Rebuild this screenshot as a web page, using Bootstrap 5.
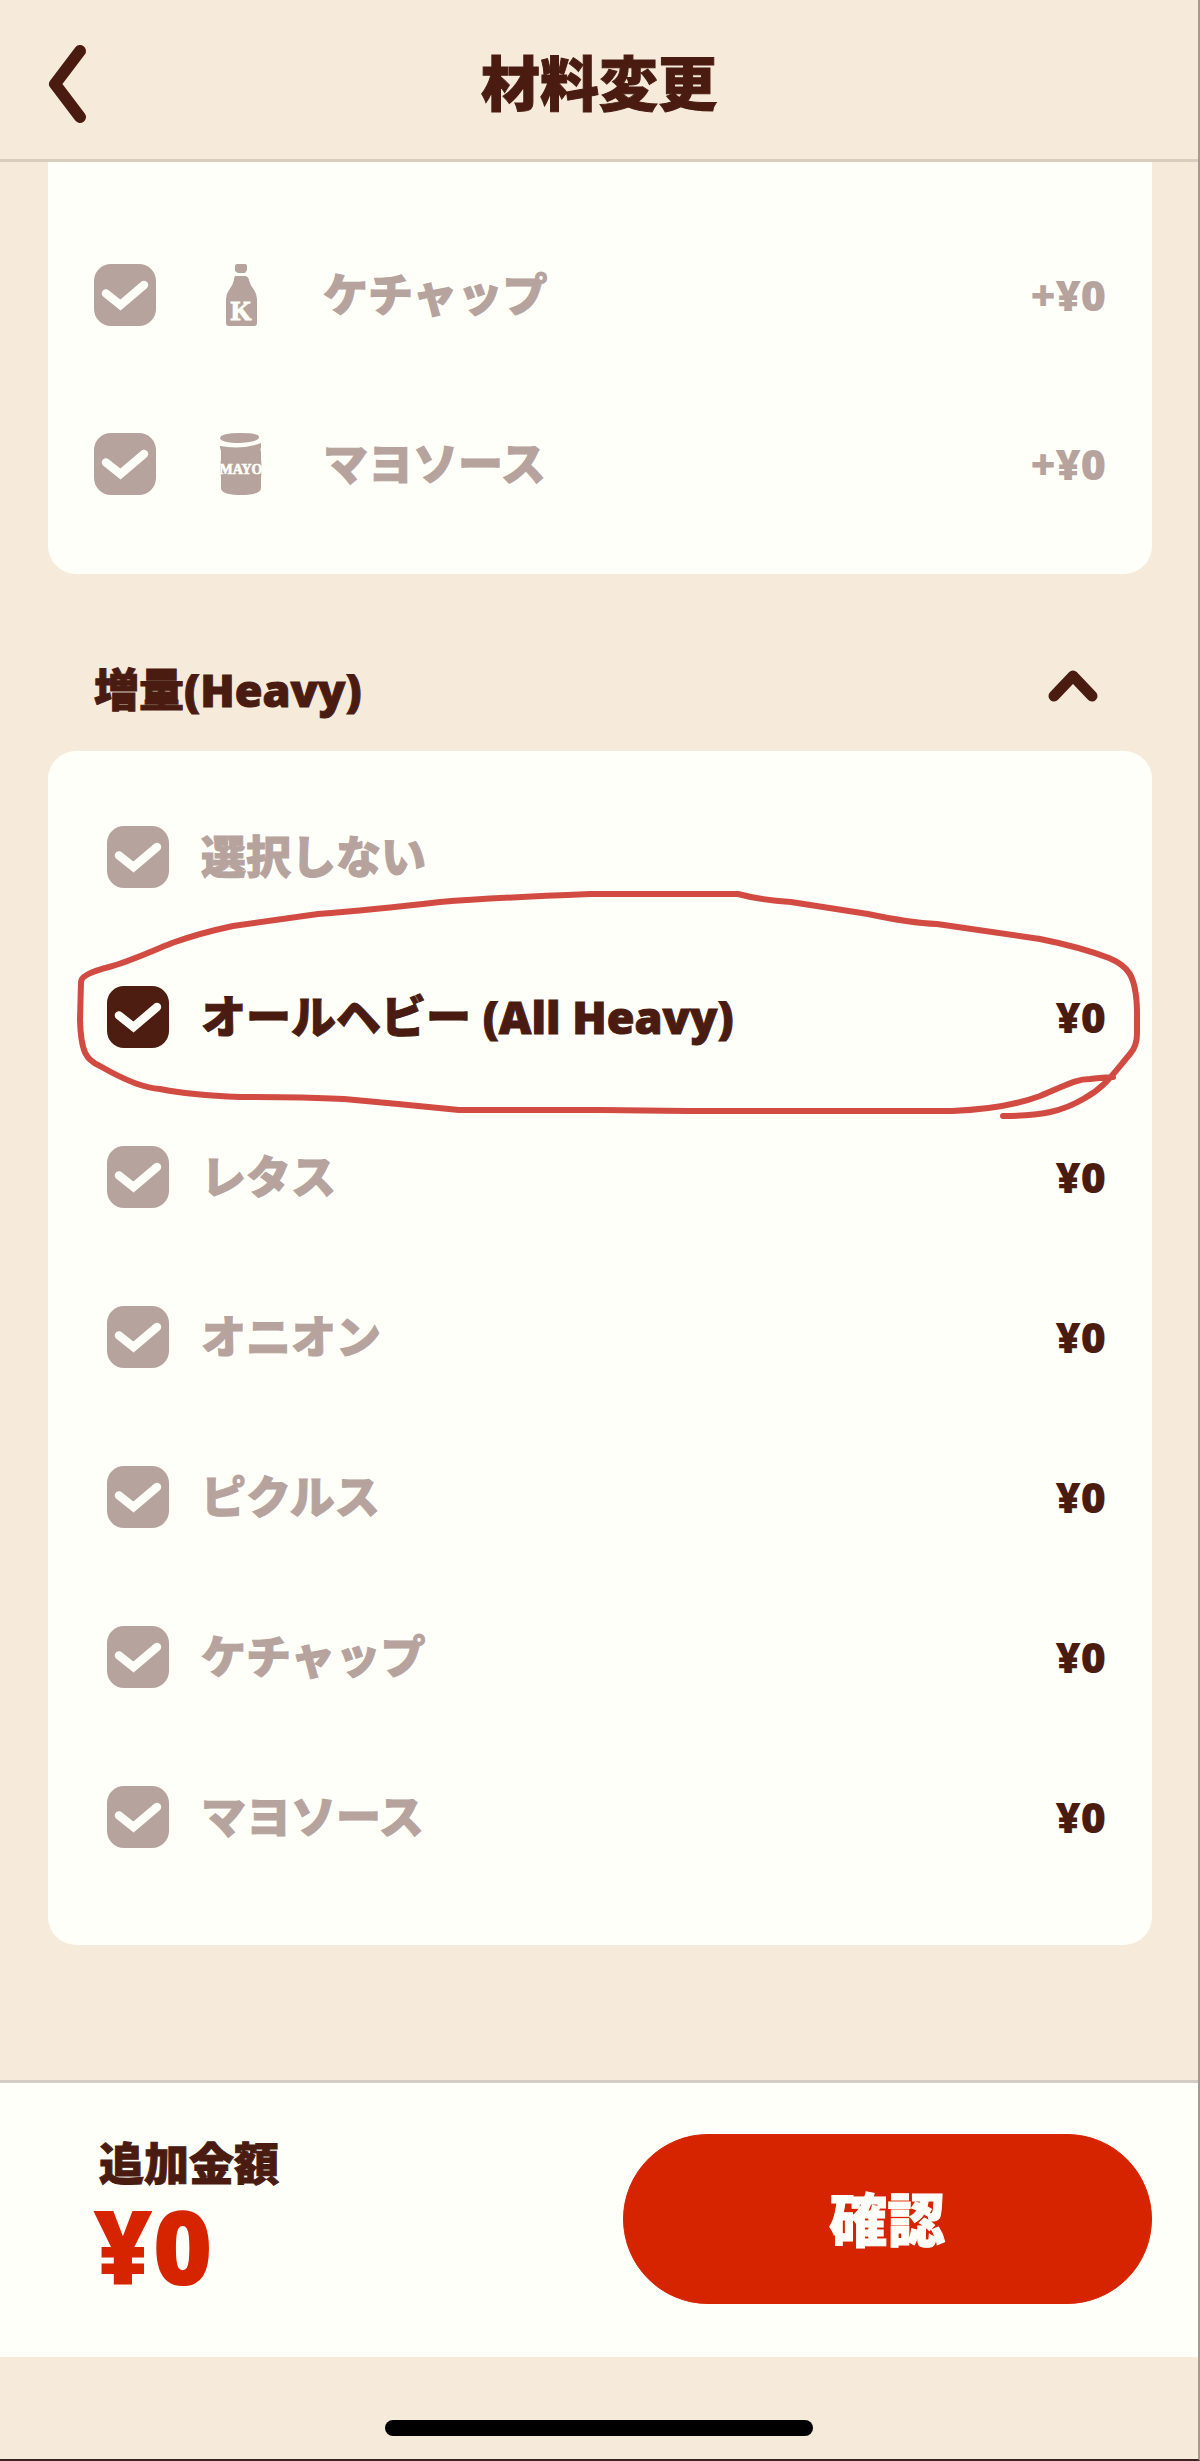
<!DOCTYPE html>
<html lang="ja">
<head>
<meta charset="utf-8">
<meta name="viewport" content="width=device-width, initial-scale=1">
<title>材料変更</title>
<link href="https://cdn.jsdelivr.net/npm/bootstrap@5.3.0/dist/css/bootstrap.min.css" rel="stylesheet">
<style>
:root { --cream:#f6eada; --paper:#fefff8; --cocoa:#4a1c11; --faded:#b6a39e; --flame:#d62300; }
body { background:var(--cream); color:var(--cocoa); font-family:"Noto Sans","Noto Sans CJK JP",sans-serif; font-weight:900; }
.screen { border-right:2px solid #a59c90; border-bottom:2px solid #3a2420; }
.topbar { height:162px; padding-top:6px; border-bottom:3px solid #d9cdbf; }
.topbar h1 { font-size:59px; line-height:80px; font-weight:900; }
.topbar h1, .name-text, .group-head span, .pay-label, .confirm { -webkit-text-stroke:1px currentColor; }
.back-btn { left:36px; top:32px; line-height:0; }
.list-area { padding:0 46px 0 48px; }
.panel { background:var(--paper); }
.panel-top { border-radius:0 0 28px 28px; padding:48px 0 26px; }
.panel-full { border-radius:28px; padding:26px 0 48px; }
.item { font-size:45px; line-height:64px; color:var(--faded); padding-right:46px; }
.item-lg { height:169px; padding-left:46px; }
.item-md { height:160px; padding-left:59px; }
.item .form-check-input { width:62px; height:62px; margin:0; border:0; border-radius:17px; background-color:var(--faded); flex:none; opacity:1; }
.item .form-check-input:checked { background-size:100% 100%; background-image:url("data:image/svg+xml,%3csvg xmlns='http://www.w3.org/2000/svg' viewBox='0 0 62 62'%3e%3cpath d='M12 29.500 26.500 41 50 21' fill='none' stroke='%23fefff8' stroke-width='8.500' stroke-linecap='round'/%3e%3c/svg%3e"); }
.item.picked .form-check-input { background-color:#4d1d11; }
.item.picked label, .cost { color:var(--cocoa); }
.cost, .cost-muted { font-size:43px; }
.gap-name { gap:32px; }
.ingredient { width:44px; height:62px; margin:0 60px 0 31px; }
.group-head { height:177px; padding:84px 52px 0 46px; font-size:45px; line-height:64px; font-weight:900; color:var(--cocoa); }
.pen { height:100%; overflow:visible; pointer-events:none; }
.paybar { background:var(--paper); border-top:3px solid #d3cbc6; margin-top:135px; height:277px; padding:51px 46px 0 93px; }
.pay-label { font-size:45px; line-height:60px; padding-left:6px; }
.pay-sum { font-size:102px; line-height:104px; color:var(--flame); }
.confirm { --bs-btn-bg:var(--flame); --bs-btn-color:var(--paper); --bs-btn-border-color:var(--flame); --bs-btn-hover-bg:#b81e00; --bs-btn-hover-color:#fff; width:50%; height:170px; font-size:58px; font-weight:900; }
.home-area { height:102px; padding-top:63px; }
.home-pill { width:428px; height:16px; background:#000; }
</style>
</head>
<body>
<div class="screen">
  <header class="topbar position-relative d-flex justify-content-center align-items-center">
    <button type="button" class="btn p-0 border-0 position-absolute back-btn" aria-label="戻る">
      <svg width="60" height="104" viewBox="0 0 60 104"><path d="M44 19 19 52 44 85" fill="none" stroke="#4a1c11" stroke-width="12" stroke-linecap="round" stroke-linejoin="round"/></svg>
    </button>
    <h1 class="m-0">材料変更</h1>
  </header>

  <main class="list-area">
    <section class="panel panel-top">
      <div class="item item-lg d-flex align-items-center">
        <input class="form-check-input" type="checkbox" id="s1" checked>
        <label for="s1" class="d-flex align-items-center ms-4 ps-2">
          <svg class="ingredient" viewBox="0 0 44 62"><path d="M18 0h8q2 0 2 2v4l-2 3h-7l-3-2V3q0-3 2-3M17 12h9q3 0 4 4 1 5 5 10 3 4 3 9v24q0 3-3 3H10q-3 0-3-3V35q0-5 3-9 4-5 5-10 0-4 2-4" fill="#b6a39e"/><text x="22" y="56" text-anchor="middle" font-family="Liberation Serif" font-weight="700" font-size="27" fill="#fefff8" stroke="#fefff8">K</text></svg>
          <span class="name-text">ケチャップ</span>
        </label>
        <span class="cost-muted ms-auto">+¥0</span>
      </div>
      <div class="item item-lg d-flex align-items-center">
        <input class="form-check-input" type="checkbox" id="s2" checked>
        <label for="s2" class="d-flex align-items-center ms-4 ps-2">
          <svg class="ingredient" viewBox="0 0 44 62"><path d="M1 5Q2 0 21 0t19 4q0 5-19 6Q2 10 1 5M1 13q22 4 41-3v4q-1 3 0 5v7q1 9 0 19v10q0 7-20 7T2 55V45q-1-10 0-20v-6q0-2-1-4z" fill="#b6a39e"/><text x="22" y="41" text-anchor="middle" font-family="Liberation Serif" font-weight="700" font-size="14" fill="#fefff8" stroke="#fefff8" stroke-width=".6">MAYO</text></svg>
          <span class="name-text">マヨソース</span>
        </label>
        <span class="cost-muted ms-auto">+¥0</span>
      </div>
    </section>

    <button type="button" class="btn border-0 w-100 d-flex justify-content-between group-head" data-bs-toggle="collapse" data-bs-target="#heavy" aria-expanded="true" aria-controls="heavy">
      <span>増量(Heavy)</span>
      <svg width="54" height="52" viewBox="0 0 54 52"><path d="M8 38 27 18 46 38" fill="none" stroke="#4a1c11" stroke-width="11" stroke-linecap="round" stroke-linejoin="round"/></svg>
    </button>

    <section class="panel panel-full collapse show" id="heavy">
      <div class="item item-md d-flex align-items-center gap-name">
        <input class="form-check-input" type="checkbox" id="h0" checked><label for="h0" class="name-text">選択しない</label>
      </div>
      <div class="item item-md d-flex align-items-center gap-name picked position-relative">
        <input class="form-check-input" type="checkbox" id="h1" checked><label for="h1" class="name-text">オールヘビー (All Heavy)</label><span class="cost ms-auto">¥0</span>
        <svg class="pen position-absolute top-0 start-0 w-100" viewBox="48 937 1104 160" preserveAspectRatio="none" aria-hidden="true"><path d="M1003 1116C1040 1116 1062 1112 1085 1098 1105 1087 1113 1074 1130 1054Q1137 1046 1137 1034V1010C1136 975 1128 966 1109 958Q1080 947 1040 939L937 924Q910 923 868 914L791 902Q760 900 738 894H590Q490 898 440 902 370 910 318 914L233 926Q200 933 172 943C145 954 128 962 109 967Q81 974 81 982L80 1020C81 1052 86 1060 100 1066Q138 1088 160 1089 190 1095 240 1097 300 1097 344 1099 400 1104 459 1110H600L688 1111H952Q1005 1109 1040 1096C1065 1086 1075 1079 1090 1079Q1098 1078 1113 1077" fill="none" stroke="#d24b43" stroke-width="6" stroke-linecap="round" stroke-linejoin="round"/></svg>
      </div>
      <div class="item item-md d-flex align-items-center gap-name">
        <input class="form-check-input" type="checkbox" id="h2" checked><label for="h2" class="name-text">レタス</label><span class="cost ms-auto">¥0</span>
      </div>
      <div class="item item-md d-flex align-items-center gap-name">
        <input class="form-check-input" type="checkbox" id="h3" checked><label for="h3" class="name-text">オニオン</label><span class="cost ms-auto">¥0</span>
      </div>
      <div class="item item-md d-flex align-items-center gap-name">
        <input class="form-check-input" type="checkbox" id="h4" checked><label for="h4" class="name-text">ピクルス</label><span class="cost ms-auto">¥0</span>
      </div>
      <div class="item item-md d-flex align-items-center gap-name">
        <input class="form-check-input" type="checkbox" id="h5" checked><label for="h5" class="name-text">ケチャップ</label><span class="cost ms-auto">¥0</span>
      </div>
      <div class="item item-md d-flex align-items-center gap-name">
        <input class="form-check-input" type="checkbox" id="h6" checked><label for="h6" class="name-text">マヨソース</label><span class="cost ms-auto">¥0</span>
      </div>
    </section>
  </main>

  <footer>
    <div class="paybar d-flex justify-content-between align-items-start">
      <div>
        <div class="pay-label">追加金額</div>
        <div class="pay-sum">¥0</div>
      </div>
      <button type="button" class="btn rounded-pill confirm">確認</button>
    </div>
    <div class="home-area d-flex justify-content-center"><div class="home-pill rounded-pill"></div></div>
  </footer>
</div>
<script src="https://cdn.jsdelivr.net/npm/bootstrap@5.3.0/dist/js/bootstrap.bundle.min.js"></script>
</body>
</html>
